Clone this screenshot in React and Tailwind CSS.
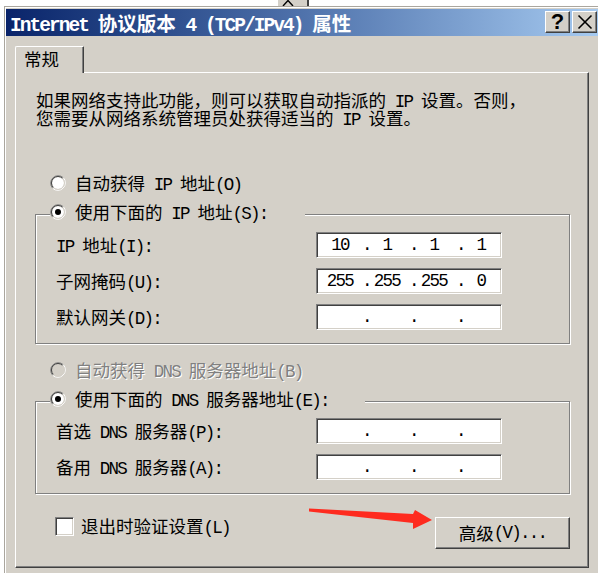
import React from "react";

const ASCII_SPLIT = /([\x20-\x7e]+)/;
const ASCII_ONLY = /^[\x20-\x7e]+$/;

function T({ s }) {
  return s.split(ASCII_SPLIT).map((p, i) =>
    p === "" ? null : ASCII_ONLY.test(p) ? (
      <span
        key={i}
        className="font-['Liberation_Mono',monospace] tracking-[-0.1em] leading-[0px] whitespace-pre"
      >
        {p}
      </span>
    ) : (
      <React.Fragment key={i}>{p}</React.Fragment>
    )
  );
}

function Radio({ checked, disabled }) {
  return (
    <svg width="16" height="16" viewBox="0 0 16 16" className="shrink-0">
      <circle cx="8" cy="8" r="6" fill={disabled ? "#d4d0c8" : "#ffffff"} />
      <path d="M2.7 13.3 A7.5 7.5 0 0 1 13.3 2.7" stroke="#808080" strokeWidth="1" fill="none" />
      <path d="M3.4 12.6 A6.5 6.5 0 0 1 12.6 3.4" stroke="#404040" strokeWidth="1" fill="none" />
      <path d="M13.3 2.7 A7.5 7.5 0 0 1 2.7 13.3" stroke="#ffffff" strokeWidth="1" fill="none" />
      <path d="M12.6 3.4 A6.5 6.5 0 0 1 3.4 12.6" stroke="#d4d0c8" strokeWidth="1" fill="none" />
      {checked && <circle cx="8" cy="8" r="3" fill="#000000" />}
    </svg>
  );
}

function IPField({ vals = ["", "", "", ""] }) {
  return (
    <div className="w-[186px] h-[26px] bg-white border border-t-[#808080] border-l-[#808080] border-r-white border-b-white shadow-[inset_1px_1px_0_#404040,inset_-1px_-1px_0_#d4d0c8] flex items-center pl-[7px] overflow-hidden">
      {vals.map((v, i) => (
        <React.Fragment key={i}>
          <div className="w-[38px] shrink-0 pr-[6px] text-center font-['Liberation_Mono',monospace] text-[17.5px] tracking-[-0.1em] leading-[18px]">
            {v}
          </div>
          {i < 3 && (
            <div className="w-[9px] shrink-0 text-center font-['Liberation_Mono',monospace] text-[17.5px] leading-[18px]">
              .
            </div>
          )}
        </React.Fragment>
      ))}
    </div>
  );
}

function Row({ label, vals }) {
  return (
    <div className="flex items-center h-[26px]">
      <div className="w-[260px] shrink-0 whitespace-nowrap">
        <T s={label} />
      </div>
      <IPField vals={vals} />
    </div>
  );
}

function RadioLabel({ label, checked, disabled }) {
  return (
    <div className="flex items-center gap-[9px] h-[20px] whitespace-nowrap">
      <Radio checked={checked} disabled={disabled} />
      <span className={disabled ? "text-[#808080] [text-shadow:1px_1px_0_#ffffff]" : ""}>
        <T s={label} />
      </span>
    </div>
  );
}

export default function App() {
  return (
    <div className="w-[598px] h-[573px] overflow-hidden bg-white flex relative text-black font-['Noto_Sans_CJK_SC',sans-serif] text-[17.5px] leading-[18px]">
      {/* background window strip on the left */}
      <div className="w-[4px] shrink-0 bg-white" />

      <div className="flex-1 min-w-0 flex flex-col">
        {/* background above the dialog */}
        <div className="h-[6px] shrink-0 flex">
          <div className="ml-[274px] w-[31px] h-[6px] bg-[#d4d0c8] border-r-2 border-[#404040]">
            <svg width="29" height="6" viewBox="0 0 29 6">
              <polyline points="5,6 10,0.5 15,6" stroke="#000" strokeWidth="1.4" fill="none" />
            </svg>
          </div>
        </div>

        {/* dialog frame */}
        <div className="flex-1 border-t border-l border-[#aaa69e]">
          <div className="h-full border-t border-l border-white pt-[1px] bg-[#d4d0c8]">
            {/* title bar */}
            <div className="h-[27px] flex items-start justify-between bg-linear-to-r from-[#0a246a] via-[#4f72ab] to-[#a6caf0]">
              <div className="pl-[4px] text-white font-bold text-[19.5px] leading-[27px] whitespace-nowrap">
                <T s="Internet 协议版本 4 (TCP/IPv4) 属性" />
              </div>
              <div className="flex gap-[2px] pt-[2px] pr-[1px]">
                <div className="w-[25px] h-[22px] bg-[#d4d0c8] border border-t-white border-l-white border-r-[#404040] border-b-[#404040] shadow-[inset_-1px_-1px_0_#808080] flex items-center justify-center font-['Liberation_Sans',sans-serif] font-bold text-[22px] leading-none">
                  ?
                </div>
                <div className="w-[25px] h-[22px] bg-[#d4d0c8] border border-t-white border-l-white border-r-[#404040] border-b-[#404040] shadow-[inset_-1px_-1px_0_#808080]">
                  <svg width="23" height="20" viewBox="0 0 23 20">
                    <line x1="5.5" y1="3.5" x2="18.5" y2="16.5" stroke="#000" strokeWidth="1.6" />
                    <line x1="18.5" y1="3.5" x2="5.5" y2="16.5" stroke="#000" strokeWidth="1.6" />
                  </svg>
                </div>
              </div>
            </div>

            {/* body */}
            <div className="pl-[9px] pt-[10px]">
              {/* tab */}
              <div className="relative z-10 -mb-[1px] w-[69px] h-[27px] bg-[#d4d0c8] border-l border-t border-r border-l-white border-t-white border-r-[#404040] rounded-tl-[2px] rounded-tr-[1px] shadow-[inset_-1px_0_0_#808080] pl-[8px] pt-[3px] leading-[18px]">
                常规
              </div>

              {/* panel */}
              <div className="w-[574px] h-[496px] border border-l-white border-t-white border-r-[#404040] border-b-[#404040] shadow-[inset_-1px_-1px_0_#808080] flex flex-col">
                <div className="mt-[18px] pl-[20px] whitespace-nowrap">
                  <div className="h-[18px]">
                    <T s="如果网络支持此功能，则可以获取自动指派的 IP 设置。否则，" />
                  </div>
                  <div className="h-[18px]">
                    <T s="您需要从网络系统管理员处获得适当的 IP 设置。" />
                  </div>
                </div>

                <div className="mt-[46px] pl-[34px]">
                  <RadioLabel label="自动获得 IP 地址(O)" />
                </div>

                <fieldset className="mt-[9px] ml-[19px] w-[535px] border border-[#808080] shadow-[1px_1px_0_#ffffff,inset_1px_1px_0_#ffffff]">
                  <legend className="ml-[14px] w-[255px] h-[25px] bg-[#d4d0c8]">
                    <RadioLabel label="使用下面的 IP 地址(S):" checked />
                  </legend>
                  <div className="pt-[5px] pb-[13px] pl-[20px] flex flex-col gap-[10px]">
                    <Row label="IP 地址(I):" vals={["10", "1", "1", "1"]} />
                    <Row label="子网掩码(U):" vals={["255", "255", "255", "0"]} />
                    <Row label="默认网关(D):" />
                  </div>
                </fieldset>

                <div className="mt-[16px] pl-[34px]">
                  <RadioLabel label="自动获得 DNS 服务器地址(B)" disabled />
                </div>

                <fieldset className="mt-[9px] ml-[19px] w-[535px] border border-[#808080] shadow-[1px_1px_0_#ffffff,inset_1px_1px_0_#ffffff]">
                  <legend className="ml-[14px] w-[315px] h-[25px] bg-[#d4d0c8]">
                    <RadioLabel label="使用下面的 DNS 服务器地址(E):" checked />
                  </legend>
                  <div className="pt-[4px] pb-[13px] pl-[20px] flex flex-col gap-[10px]">
                    <Row label="首选 DNS 服务器(P):" />
                    <Row label="备用 DNS 服务器(A):" />
                  </div>
                </fieldset>

                <div className="mt-[22px] pl-[39px] pr-[18px] flex items-start justify-between">
                  <div className="flex items-center gap-[7px] h-[20px] whitespace-nowrap">
                    <div className="w-[19px] h-[19px] bg-white border border-t-[#808080] border-l-[#808080] border-r-white border-b-white shadow-[inset_1px_1px_0_#404040,inset_-1px_-1px_0_#d4d0c8]" />
                    <span>
                      <T s="退出时验证设置(L)" />
                    </span>
                  </div>
                  <div className="mt-[1px] w-[135px] h-[32px] bg-[#d4d0c8] border border-t-white border-l-white border-r-[#404040] border-b-[#404040] shadow-[inset_-1px_-1px_0_#808080] flex items-center justify-center whitespace-nowrap">
                    <T s="高级(V)..." />
                  </div>
                </div>
              </div>
            </div>
          </div>
        </div>
      </div>

      {/* red annotation arrow */}
      <svg
        className="absolute left-0 top-0 pointer-events-none"
        width="598"
        height="573"
        viewBox="0 0 598 573"
      >
        <polygon
          points="309,508.5 413,514 415,510 432,520 413,529 413,523 309,511.5"
          fill="#fe2b1f"
        />
      </svg>
    </div>
  );
}
